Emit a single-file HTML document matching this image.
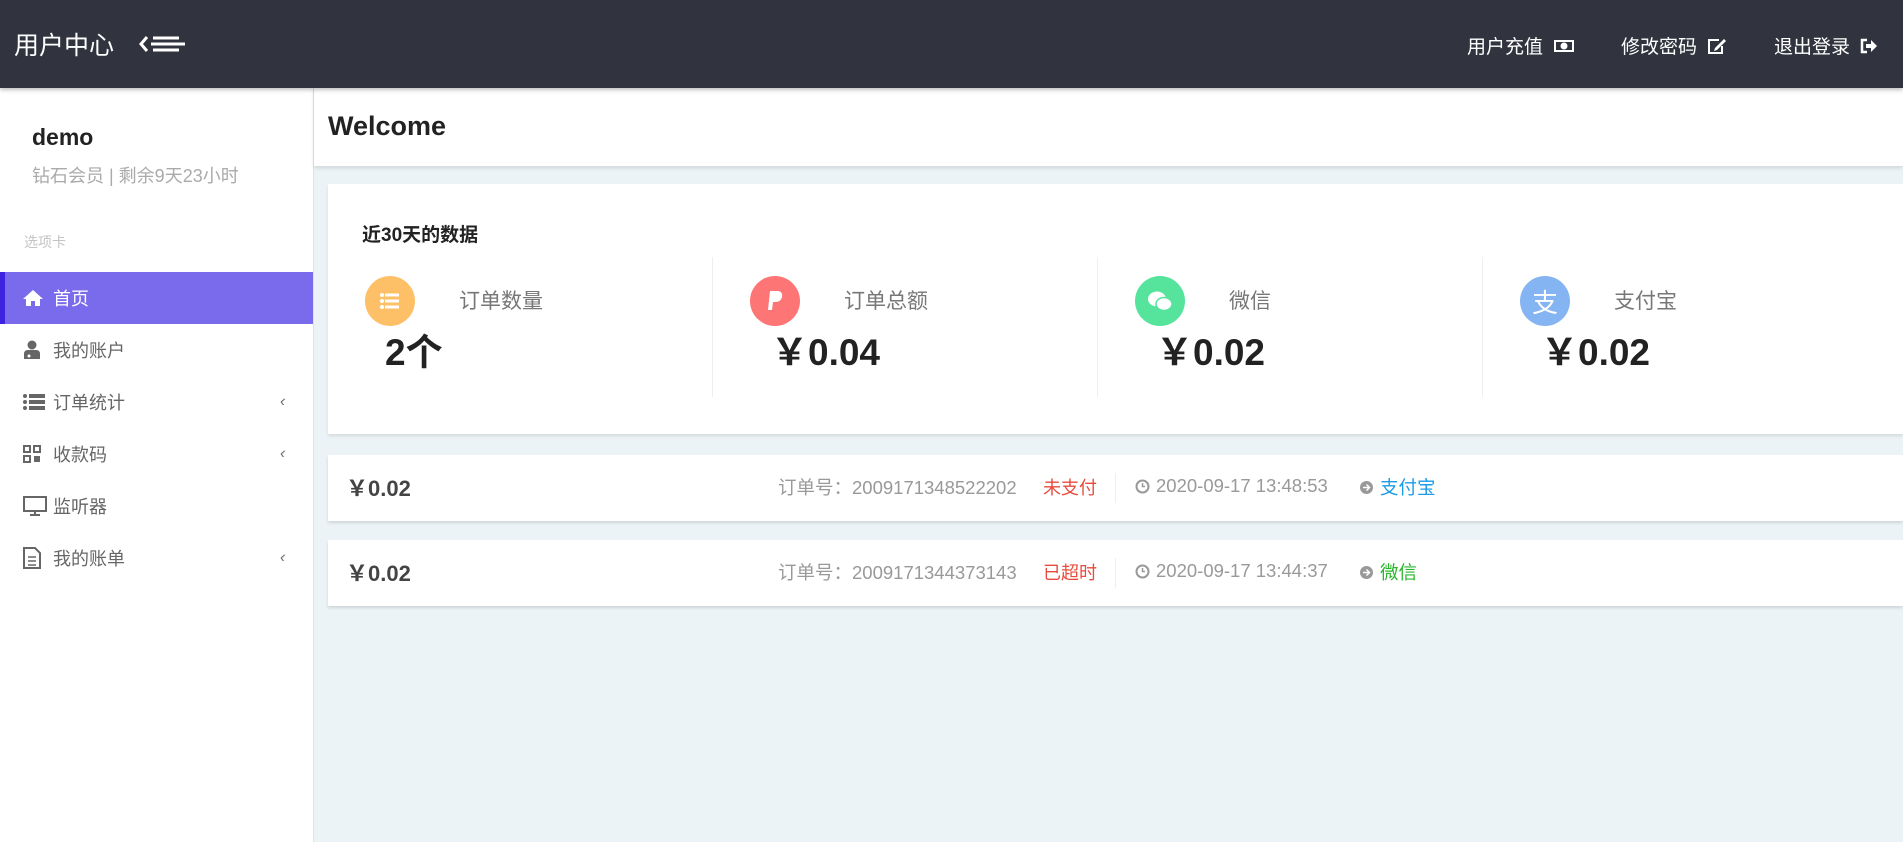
<!DOCTYPE html>
<html><head><meta charset="utf-8">
<style>
*{margin:0;padding:0;box-sizing:border-box}
body{width:1903px;height:842px;overflow:hidden;font-family:"Liberation Sans","Noto Sans CJK SC",sans-serif;background:#ebf3f6;position:relative}
.top{position:absolute;left:0;top:0;width:1903px;height:88px;background:#31343f;box-shadow:0 2px 4px rgba(0,0,0,.25);z-index:3}
.top .t{position:absolute;left:14px;top:26px;color:#fff;font-size:25px}
.top .nav{position:absolute;top:32px;color:#fff;font-size:19px;display:flex;align-items:center;gap:10px}
.side{position:absolute;left:0;top:88px;width:314px;height:754px;background:#fff;border-right:1px solid #dde3e8}
.side .u{position:absolute;left:32px;top:36px;font-size:23px;font-weight:bold;color:#222}
.side .s{position:absolute;left:32px;top:74px;font-size:18px;color:#aaa}
.side .c{position:absolute;left:24px;top:144px;font-size:14px;color:#c4c4c4}
.mi{position:absolute;left:0;width:313px;height:52px;display:flex;align-items:center;font-size:18px;color:#666}
.mi svg{position:absolute;left:23px}
.mi span{position:absolute;left:53px}
.mi .ar{position:absolute;left:280px;font-size:16px;color:#666}
.mi.on{background:#7a6aec;color:#fff;border-left:5px solid #3f22e0}
.mi.on svg{left:18px}.mi.on span{left:48px}
.wel{position:absolute;left:314px;top:88px;width:1589px;height:78px;background:#fff;box-shadow:0 2px 4px rgba(0,0,0,.12)}
.wel b{position:absolute;left:14px;top:23px;font-size:27px;color:#222}
.card{position:absolute;left:328px;top:184px;width:1575px;height:250px;background:#fff;box-shadow:0 2px 3px rgba(0,0,0,.1)}
.card h3{position:absolute;left:34px;top:36px;font-size:19px;color:#222}
.col{position:absolute;top:73px;width:385px;height:140px}
.col .ic{position:absolute;left:37px;top:19px;width:50px;height:50px;border-radius:50%;display:flex;align-items:center;justify-content:center}
.col .lb{position:absolute;left:131px;top:28px;font-size:21px;color:#777}
.col .v{position:absolute;left:57px;top:65px;font-size:37px;font-weight:bold;color:#222}
.div{position:absolute;top:73px;width:1px;height:140px;background:#eee}
.row{position:absolute;left:328px;width:1575px;height:66px;background:#fff;box-shadow:0 2px 3px rgba(0,0,0,.12);font-size:18.5px;color:#999}
.row .a{position:absolute;left:18px;top:16px;font-size:22px;font-weight:bold;color:#444}
.row .o{position:absolute;left:450px;top:19px}
.row .st{position:absolute;left:715px;top:19px;font-size:18px}
.row .dv{position:absolute;left:787px;top:18px;width:1px;height:30px;background:#eee}
.row .d{position:absolute;left:807px;top:20px;display:flex;align-items:center;gap:6px}
.row .p{position:absolute;left:1031px;top:19px;display:flex;align-items:center;gap:6px}
</style></head><body>
<div class="top">
 <div class="t">用户中心</div>
 <svg style="position:absolute;left:139px;top:34px" width="46" height="20" viewBox="0 0 46 20"><path d="M12 10H46M14 4H40M14 16H40" stroke="#fff" stroke-width="3"/><path d="M8 3L2 10L8 17" stroke="#fff" stroke-width="3" fill="none"/></svg>
 <div class="nav" style="left:1467px">用户充值 <svg width="22" height="14" viewBox="0 0 22 14"><rect x="1" y="1" width="20" height="12" fill="#fff"/><rect x="3" y="3" width="16" height="8" fill="#31343f"/><circle cx="11" cy="7" r="3.5" fill="#fff"/></svg></div>
 <div class="nav" style="left:1621px">修改密码 <svg width="20" height="18" viewBox="0 0 20 18"><path d="M12 3H2V16H15V9" stroke="#fff" stroke-width="2" fill="none"/><path d="M8 11L17 2L19 4L10 13L7 14Z" fill="#fff"/></svg></div>
 <div class="nav" style="left:1774px">退出登录 <svg width="18" height="18" viewBox="0 0 18 18"><path d="M7 3H2V15H7" stroke="#fff" stroke-width="2.5" fill="none"/><path d="M6 7H11V3L17 9L11 15V11H6Z" fill="#fff"/></svg></div>
</div>
<div class="side">
 <div class="u">demo</div>
 <div class="s">钻石会员 | 剩余9天23小时</div>
 <div class="c">选项卡</div>
 <div class="mi on" style="top:184px"><svg width="20" height="18" viewBox="0 0 20 18"><path d="M10 1L0 10H3V17H8V12H12V17H17V10H20Z" fill="#fff"/></svg><span>首页</span></div>
 <div class="mi" style="top:236px"><svg width="18" height="20" viewBox="0 0 18 20"><circle cx="9" cy="5" r="4.5" fill="#666"/><path d="M1 19V14Q1 10 5 10H13Q17 10 17 14V19Z" fill="#666"/><circle cx="6" cy="16" r="1.5" fill="#fff"/></svg><span>我的账户</span></div>
 <div class="mi" style="top:288px"><svg width="22" height="18" viewBox="0 0 22 18"><g fill="#666"><circle cx="2" cy="3" r="2"/><circle cx="2" cy="9" r="2"/><circle cx="2" cy="15" r="2"/><rect x="6" y="1" width="16" height="4"/><rect x="6" y="7" width="16" height="4"/><rect x="6" y="13" width="16" height="4"/></g></svg><span>订单统计</span><i class="ar">‹</i></div>
 <div class="mi" style="top:340px"><svg width="18" height="18" viewBox="0 0 18 18"><g fill="none" stroke="#666" stroke-width="2"><rect x="1" y="1" width="6" height="6"/><rect x="11" y="1" width="6" height="6"/><rect x="1" y="11" width="6" height="6"/></g><rect x="11" y="11" width="6" height="6" fill="#666"/></svg><span>收款码</span><i class="ar">‹</i></div>
 <div class="mi" style="top:392px"><svg width="24" height="20" viewBox="0 0 24 20"><rect x="1" y="1" width="22" height="14" fill="none" stroke="#666" stroke-width="2"/><path d="M7 19H17M12 15V19" stroke="#666" stroke-width="2"/></svg><span>监听器</span></div>
 <div class="mi" style="top:444px"><svg width="18" height="22" viewBox="0 0 18 22"><path d="M1 1H12L17 6V21H1Z" fill="none" stroke="#666" stroke-width="2"/><path d="M5 10H13M5 14H13M5 18H13" stroke="#666" stroke-width="1.5"/></svg><span>我的账单</span><i class="ar">‹</i></div>
</div>
<div class="wel"><b>Welcome</b></div>
<div class="card">
 <h3>近30天的数据</h3>
 <div class="col" style="left:0"><div class="ic" style="background:#fdc067"><svg width="20" height="16" viewBox="0 0 20 16"><g fill="#fff"><circle cx="2" cy="2" r="2"/><circle cx="2" cy="8" r="2"/><circle cx="2" cy="14" r="2"/><rect x="5" y="0.5" width="14" height="3"/><rect x="5" y="6.5" width="14" height="3"/><rect x="5" y="12.5" width="14" height="3"/></g></svg></div><div class="lb">订单数量</div><div class="v" style="left:57px">2个</div></div>
 <div class="div" style="left:384px"></div>
 <div class="col" style="left:385px"><div class="ic" style="background:#fe7575"><svg width="18" height="22" viewBox="0 0 18 22"><path d="M4 1H11Q17 1 16 7Q15 12 9 12H7L6 20H2Z" fill="#fff"/></svg></div><div class="lb">订单总额</div><div class="v" style="left:58px">￥0.04</div></div>
 <div class="div" style="left:769px"></div>
 <div class="col" style="left:770px"><div class="ic" style="background:#56e39c"><svg width="26" height="22" viewBox="0 0 26 22"><ellipse cx="10" cy="9" rx="9" ry="7.5" fill="#fff"/><ellipse cx="17" cy="14" rx="8" ry="6.5" fill="#fff" stroke="#56e39c" stroke-width="1.5"/></svg></div><div class="lb">微信</div><div class="v" style="left:58px">￥0.02</div></div>
 <div class="div" style="left:1154px"></div>
 <div class="col" style="left:1155px"><div class="ic" style="background:#85b4f2;color:#fff;font-size:26px">支</div><div class="lb">支付宝</div><div class="v" style="left:58px">￥0.02</div></div>
</div>
<div class="row" style="top:455px"><div class="a">￥0.02</div><div class="o">订单号：2009171348522202</div><div class="st" style="color:#e84c3d">未支付</div><div class="dv"></div><div class="d"><svg width="15" height="15"><circle cx="7.5" cy="7.5" r="6" fill="none" stroke="#999" stroke-width="2"/><path d="M7.5 4V7.5H10" stroke="#999" stroke-width="1.5" fill="none"/></svg>2020-09-17 13:48:53</div><div class="p"><svg width="15" height="15"><circle cx="7.5" cy="7.5" r="6.5" fill="#999"/><path d="M4 7.5H10M7.5 4.5L10.5 7.5L7.5 10.5" stroke="#fff" stroke-width="1.5" fill="none"/></svg><span style="color:#1a9ce8">支付宝</span></div></div>
<div class="row" style="top:540px"><div class="a">￥0.02</div><div class="o">订单号：2009171344373143</div><div class="st" style="color:#e84c3d">已超时</div><div class="dv"></div><div class="d"><svg width="15" height="15"><circle cx="7.5" cy="7.5" r="6" fill="none" stroke="#999" stroke-width="2"/><path d="M7.5 4V7.5H10" stroke="#999" stroke-width="1.5" fill="none"/></svg>2020-09-17 13:44:37</div><div class="p"><svg width="15" height="15"><circle cx="7.5" cy="7.5" r="6.5" fill="#999"/><path d="M4 7.5H10M7.5 4.5L10.5 7.5L7.5 10.5" stroke="#fff" stroke-width="1.5" fill="none"/></svg><span style="color:#2bb52b">微信</span></div></div>
</body></html>
